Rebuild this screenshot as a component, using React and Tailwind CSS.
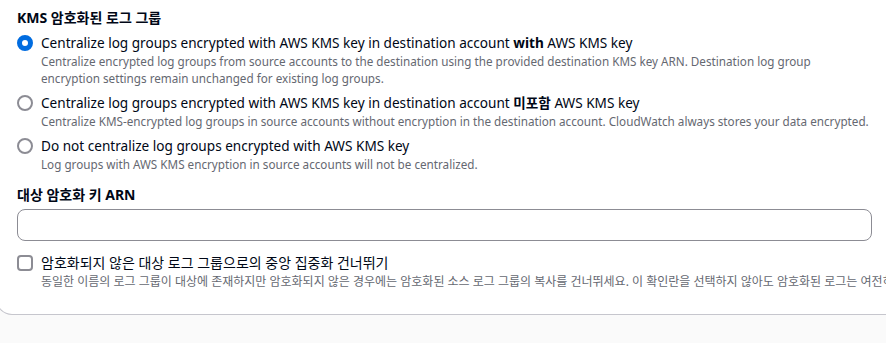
export default function App() {
  const options = [
    {
      id: "with",
      checked: true,
      label: (
        <>
          Centralize log groups encrypted with AWS KMS key in destination account{" "}
          <span className="font-bold">with</span> AWS KMS key
        </>
      ),
      desc: (
        <>
          Centralize encrypted log groups from source accounts to the destination using the provided destination KMS key ARN. Destination log group
          <br />
          encryption settings remain unchanged for existing log groups.
        </>
      ),
    },
    {
      id: "without",
      checked: false,
      label: (
        <>
          Centralize log groups encrypted with AWS KMS key in destination account{" "}
          <span className="font-bold">미포함</span> AWS KMS key
        </>
      ),
      desc: "Centralize KMS-encrypted log groups in source accounts without encryption in the destination account. CloudWatch always stores your data encrypted.",
    },
    {
      id: "none",
      checked: false,
      label: "Do not centralize log groups encrypted with AWS KMS key",
      desc: "Log groups with AWS KMS encryption in source accounts will not be centralized.",
    },
  ];

  return (
    <div
      className="w-full h-[343px] overflow-hidden bg-[#fafafa] text-[#000716]"
      style={{ fontFamily: '"Noto Sans", "Noto Sans CJK KR", sans-serif' }}
    >
      <div className="-ml-1 w-[920px] bg-white border border-t-0 border-[#c6c6cd] rounded-bl-2xl pl-5 pt-2 pb-6">
        {/* KMS section */}
        <h3 className="text-sm leading-5 font-bold">KMS 암호화된 로그 그룹</h3>

        <div className="mt-[5px] flex flex-col gap-[6px]">
          {options.map((opt) => (
            <label key={opt.id} className="flex gap-2">
              <span className="w-4 h-5 flex items-center shrink-0">
                {opt.checked ? (
                  <span className="w-4 h-4 rounded-full border-[5px] border-[#006ce0] bg-white" />
                ) : (
                  <span className="w-4 h-4 rounded-full border-2 border-[#8c8c94] bg-white" />
                )}
              </span>
              <span className="flex flex-col">
                <span className="text-[13.6px] leading-5">{opt.label}</span>
                <span className="text-[11.7px] leading-[17px] text-[#656871] whitespace-nowrap">{opt.desc}</span>
              </span>
            </label>
          ))}
        </div>

        {/* Destination key */}
        <div className="mt-3 text-sm leading-5 font-bold">대상 암호화 키 ARN</div>
        <div className="mt-1 w-[855px] h-8 rounded-lg border border-[#8c8c94] bg-white" />

        {/* Skip checkbox */}
        <label className="mt-3 flex gap-2">
          <span className="w-4 h-5 flex items-center shrink-0">
            <span className="w-4 h-4 rounded border-2 border-[#8c8c94] bg-white" />
          </span>
          <span className="flex flex-col">
            <span className="text-sm leading-5">암호화되지 않은 대상 로그 그룹으로의 중앙 집중화 건너뛰기</span>
            <span className="text-xs leading-[17px] text-[#656871] whitespace-nowrap">
              동일한 이름의 로그 그룹이 대상에 존재하지만 암호화되지 않은 경우에는 암호화된 소스 로그 그룹의 복사를 건너뛰세요. 이 확인란을 선택하지 않아도 암호화된 로그는 여전히 중앙 집중화됩니다.
            </span>
          </span>
        </label>
      </div>
    </div>
  );
}
